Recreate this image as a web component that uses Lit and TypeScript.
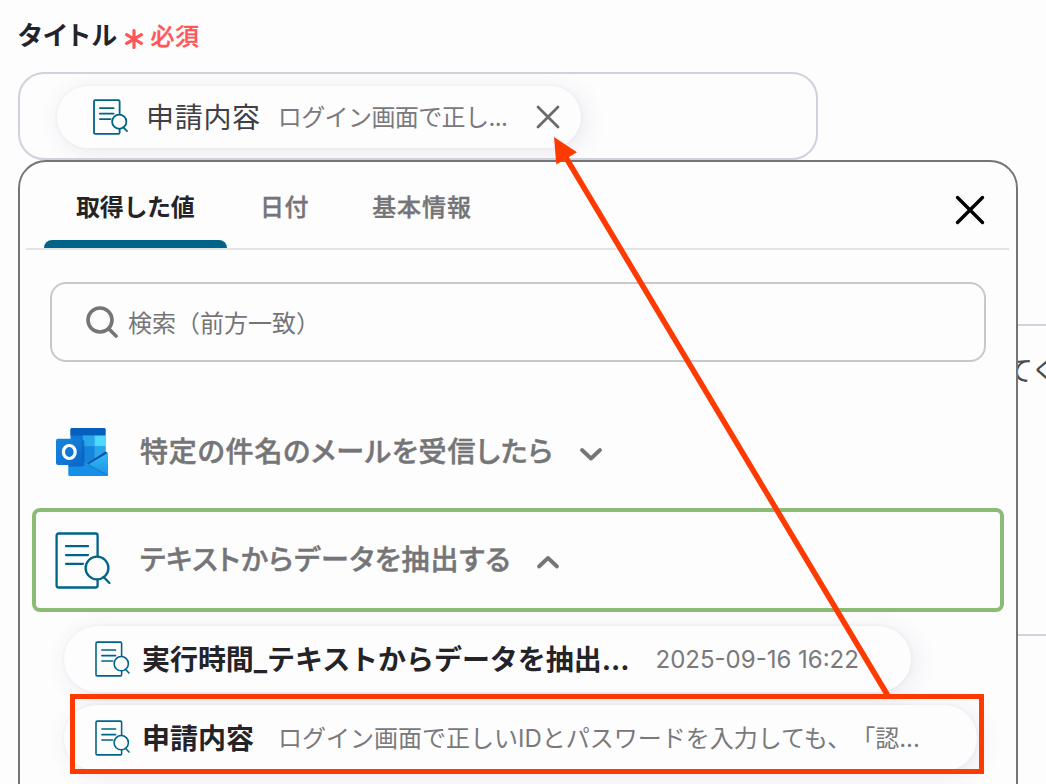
import { LitElement, html, css, svg } from 'lit';
import { customElement, property } from 'lit/decorators.js';

@customElement('extract-icon')
export class ExtractIcon extends LitElement {
  static styles = css`
    :host {
      display: block;
      flex: none;
      width: 56px;
      height: 57px;
    }

    svg {
      display: block;
      width: 100%;
      height: 100%;
      fill: none;
      stroke: #006388;
      stroke-width: var(--icon-stroke, 2.3);
      stroke-linecap: round;
    }

    .lens {
      fill: #fdfdfe;
    }
  `;

  render() {
    return html`<svg viewBox="0 0 56 57">
      <rect x="1.6" y="1.5" width="41" height="54" rx="2" />
      <path d="M11 14.2H33M11 23.1H33M11 31.8H28" />
      <circle class="lens" cx="42" cy="36" r="11.4" />
      <path d="M48.6 45L54.4 51" />
    </svg>`;
  }
}

@customElement('outlook-icon')
export class OutlookIcon extends LitElement {
  static styles = css`
    :host {
      display: block;
      flex: none;
      width: 52px;
      height: 48px;
    }

    svg {
      display: block;
    }
  `;

  render() {
    return html`<svg width="52" height="48" viewBox="0 0 52 48">
      <defs>
        <linearGradient id="tile" x1="0" y1="0" x2="1" y2="1">
          <stop offset="0" stop-color="#1784d9" />
          <stop offset=".5" stop-color="#107ad5" />
          <stop offset="1" stop-color="#0a63c9" />
        </linearGradient>
        <linearGradient id="flap" x1="0" y1="0" x2="0" y2="1">
          <stop offset="0" stop-color="#35b8f1" />
          <stop offset="1" stop-color="#1a93e6" />
        </linearGradient>
      </defs>
      <path d="M16 0H48Q49.5 0 49.5 1.5V40H14.5V1.5Q14.5 0 16 0Z" fill="#0f78d4" />
      <path d="M16 0H48Q49.5 0 49.5 1.5V7.5H14.5V1.5Q14.5 0 16 0Z" fill="#0560bd" />
      <path d="M27 7.5H38.5V18.5H27Z" fill="#28a8ea" />
      <path d="M38.5 7.5H49.5V18.5H38.5Z" fill="#50d9ff" />
      <path d="M27 18.5H38.5V36H27Z" fill="#1484dc" />
      <path d="M38.5 18.5H49.5V30H38.5Z" fill="#28a8ea" />
      <path d="M49.5 23.5L52 25L34 36L31 35.5Z" fill="#0a4fa5" />
      <path d="M12.5 26L32 36.5L52 25V46.5Q52 48 50.5 48H14Q12.5 48 12.5 46.5Z" fill="url(#flap)" />
      <path d="M12.5 26L51 47.8Q50.8 48 50.5 48H14Q12.5 48 12.5 46.5Z" fill="#1590e6" />
      <path d="M32 36.5L51.7 47.3" stroke="#0f6cc0" stroke-width=".8" />
      <path d="M14.5 12H27Q28.5 12 28.5 13.5V36Q28.5 38.5 26 38.5H12.5V14Z" fill="#0a4f9f" opacity=".55" />
      <rect y="10.7" width="26.3" height="26.3" rx="2" fill="url(#tile)" />
      <ellipse cx="13.3" cy="24" rx="5.9" ry="6.5" fill="none" stroke="#fff" stroke-width="3.2" />
    </svg>`;
  }
}

@customElement('value-pill')
export class ValuePill extends LitElement {
  @property() label = '';
  @property() value = '';
  @property({ type: Boolean }) removable = false;

  static styles = css`
    :host {
      display: flex;
      align-items: center;
      box-sizing: border-box;
      height: 66px;
      padding-left: 31px;
      border-radius: 33px;
      background: #fdfdfe;
      box-shadow: 4px 4px 24px rgba(60, 40, 80, 0.1), 0 0 4px rgba(60, 40, 80, 0.06);
      white-space: nowrap;
      --icon-stroke: 2.5;
    }

    extract-icon {
      width: 35px;
      height: 36px;
    }

    .label {
      margin: 4px 0 0 12px;
      font-size: 28px;
      font-weight: 700;
      color: #232328;
      letter-spacing: var(--label-spacing, 0);
    }

    .value {
      margin: 2px 0 0 var(--value-gap, 24px);
      font-size: 24px;
      color: #79797c;
      text-spacing-trim: space-all;
    }

    .remove {
      margin-left: 29px;
      stroke: #6b6b6e;
      stroke-width: 2.8;
      stroke-linecap: round;
    }

    :host([removable]) {
      height: 62px;
      padding-left: 36px;
      --icon-stroke: 2.9;
    }

    :host([removable]) .label {
      margin-left: 18px;
      font-weight: 400;
      color: #3f3f44;
      letter-spacing: 0.7px;
    }

    :host([removable]) .value {
      letter-spacing: -0.6px;
    }
  `;

  render() {
    return html`
      <extract-icon></extract-icon>
      <span class="label">${this.label}</span>
      <span class="value">${this.value}</span>
      ${this.removable
        ? html`<svg class="remove" width="24" height="24" viewBox="0 0 24 24">
            <path d="M2 2L22 22M22 2L2 22" />
          </svg>`
        : ''}
    `;
  }
}

@customElement('app-root')
export class AppRoot extends LitElement {
  static styles = css`
    :host {
      display: block;
      position: relative;
      width: 1046px;
      height: 784px;
      overflow: hidden;
      background: #fdfdfe;
      font-family: Inter, 'Noto Sans CJK JP', sans-serif;
      color: #232328;
      line-height: 1.2;
    }

    .field-label {
      display: flex;
      align-items: center;
      height: 72px;
      padding-left: 18px;
      box-sizing: border-box;
      white-space: nowrap;
    }

    .name {
      font-size: 26px;
      font-weight: 700;
      font-feature-settings: 'palt';
      letter-spacing: 1.6px;
    }

    .star {
      margin: 6px 0 0 6px;
      stroke: #ff5657;
      stroke-width: 3.2;
      stroke-linecap: round;
    }

    .required {
      margin: 2px 0 0 8px;
      font-size: 24px;
      font-weight: 500;
      color: #ff5657;
      letter-spacing: 0.5px;
      -webkit-text-stroke: 0.3px;
    }

    .input {
      display: flex;
      align-items: center;
      box-sizing: border-box;
      width: 800px;
      height: 88px;
      margin-left: 18px;
      padding: 2px 0 0 37px;
      border: 2px solid #cfd1db;
      border-radius: 26px;
      overflow: hidden;
    }

    .input value-pill {
      width: 524px;
      --value-gap: 17px;
    }

    .next-field {
      box-sizing: border-box;
      width: 1100px;
      height: 312px;
      margin: 164px 0 0 18px;
      padding: 29px 0 0 985px;
      border: 2px solid #cfd3df;
      font-size: 28px;
      color: #4b4b4f;
      letter-spacing: -1.5px;
      white-space: nowrap;
    }

    /* Dropdown opened over the rest of the form */
    .popover {
      position: absolute;
      top: 160px;
      left: 18px;
      box-sizing: border-box;
      width: 1000px;
      height: 680px;
      border: 2px solid #757578;
      border-radius: 28px;
      background: #fdfdfe;
    }

    .tabs {
      display: flex;
      box-sizing: border-box;
      height: 88px;
      margin: 0 7px 0 6px;
      padding-left: 18px;
      border-bottom: 2px solid #e3e3e5;
      font-size: 24px;
      font-weight: 500;
      color: #757577;
      line-height: 92px;
      white-space: nowrap;
    }

    .tab {
      height: 86px;
      margin-left: 33px;
      letter-spacing: 0.6px;
      -webkit-text-stroke: 0.4px;
    }

    .tab.last {
      margin-left: 63px;
      letter-spacing: 0.9px;
    }

    .tab.active {
      box-sizing: border-box;
      width: 183px;
      margin-left: 0;
      padding-left: 32px;
      font-weight: 700;
      color: #232328;
      letter-spacing: -0.3px;
      -webkit-text-stroke: 0;
    }

    .tab.active::after {
      content: '';
      display: block;
      height: 8px;
      margin: -14px 0 0 -32px;
      border-radius: 8px 8px 0 0;
      background: #006388;
    }

    .close {
      margin: 32px 23px 0 auto;
      stroke: #000;
      stroke-width: 3.4;
      stroke-linecap: round;
    }

    .search {
      display: flex;
      align-items: center;
      box-sizing: border-box;
      width: 936px;
      height: 80px;
      margin: 32px 0 0 30px;
      padding-left: 34px;
      border: 2px solid #c8c8cb;
      border-radius: 16px;
      font-size: 24px;
      color: #757577;
    }

    .search span {
      margin: 4px 0 0 10px;
    }

    .search svg {
      stroke: #757577;
      stroke-width: 3.6;
      stroke-linecap: round;
      fill: none;
    }

    .step {
      display: flex;
      align-items: center;
      box-sizing: border-box;
      width: 972px;
      height: 104px;
      margin-left: 12px;
      padding-left: 20px;
      border: 4px solid transparent;
      border-radius: 8px;
      font-size: 28px;
      font-weight: 500;
      color: #757577;
      white-space: nowrap;
    }

    .step.first {
      margin-top: 38px;
    }

    .step.selected {
      margin-top: 4px;
      padding-left: 19px;
      border-color: #8cbb76;
    }

    .title {
      margin: 2px 0 0 32px;
      font-feature-settings: 'palt';
      letter-spacing: 0.85px;
      -webkit-text-stroke: 0.5px;
    }

    .selected .title {
      margin-left: 29px;
    }

    .chevron {
      margin: 4px 0 0 25px;
      fill: none;
      stroke: #757577;
      stroke-width: 3.8;
      stroke-linecap: round;
      stroke-linejoin: round;
    }

    .values {
      display: flex;
      flex-direction: column;
      gap: 13px;
      margin: 14px 0 0 44px;
    }

    .short {
      width: 847px;
      --value-gap: 26px;
      --label-spacing: -0.05px;
    }

    .long {
      width: 913px;
    }

    .annotation {
      position: absolute;
      top: 0;
      left: 0;
      fill: none;
      stroke: #ff3a00;
    }

    .annotation .head {
      fill: #ff3a00;
      stroke: none;
    }
  `;

  private chevron(d: string) {
    return html`<svg class="chevron" width="24" height="16" viewBox="0 0 24 16">${svg`<path d=${d} />`}</svg>`;
  }

  render() {
    return html`
      <div class="field-label">
        <span class="name">タイトル</span>
        <svg class="star" width="18" height="20" viewBox="0 0 18 20">
          <path d="M9 1.6V18.4M1.6 5.7L16.4 14.3M16.4 5.7L1.6 14.3" />
        </svg>
        <span class="required">必須</span>
      </div>
      <div class="input">
        <value-pill removable label="申請内容" value="ログイン画面で正し..."></value-pill>
      </div>
      <div class="next-field">てく</div>

      <div class="popover">
        <div class="tabs">
          <div class="tab active">取得した値</div>
          <div class="tab">日付</div>
          <div class="tab last">基本情報</div>
          <svg class="close" width="32" height="32" viewBox="0 0 32 32">
            <path d="M3.5 3.5L28.5 28.5M28.5 3.5L3.5 28.5" />
          </svg>
        </div>
        <div class="search">
          <svg width="32" height="32" viewBox="0 0 32 32">
            <circle cx="14" cy="14" r="12" />
            <path d="M23 23L30 30" />
          </svg>
          <span>検索（前方一致）</span>
        </div>
        <div class="step first">
          <outlook-icon></outlook-icon>
          <span class="title">特定の件名のメールを受信したら</span>
          ${this.chevron('M3 4L12 12.5L21 4')}
        </div>
        <div class="step selected">
          <extract-icon></extract-icon>
          <span class="title">テキストからデータを抽出する</span>
          ${this.chevron('M3 12.5L12 4L21 12.5')}
        </div>
        <div class="values">
          <value-pill class="short" label="実行時間_テキストからデータを抽出..." value="2025-09-16 16:22"></value-pill>
          <value-pill class="long" label="申請内容" value="ログイン画面で正しいIDとパスワードを入力しても、「認..."></value-pill>
        </div>
      </div>

      <svg class="annotation" width="1046" height="784" viewBox="0 0 1046 784">
        <rect x="72.5" y="696.5" width="909" height="75" stroke-width="5" />
        <path d="M887.5 695L565 156" stroke-width="5.5" />
        <path class="head" d="M554 137L577 152.3L556.3 164.5Z" />
      </svg>
    `;
  }
}
